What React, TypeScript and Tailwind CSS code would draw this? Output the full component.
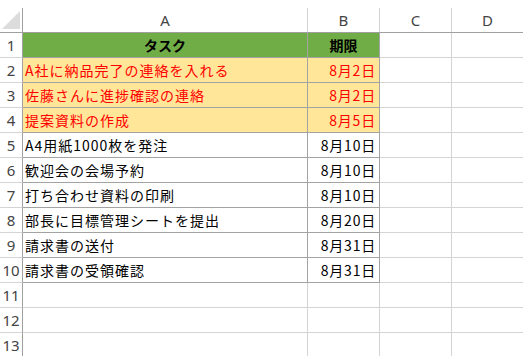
import React from "react";

type Task = { name: string; due: string; urgent?: boolean };

const tasks: Task[] = [
  { name: "A社に納品完了の連絡を入れる", due: "8月2日", urgent: true },
  { name: "佐藤さんに進捗確認の連絡", due: "8月2日", urgent: true },
  { name: "提案資料の作成", due: "8月5日", urgent: true },
  { name: "A4用紙1000枚を発注", due: "8月10日" },
  { name: "歓迎会の会場予約", due: "8月10日" },
  { name: "打ち合わせ資料の印刷", due: "8月10日" },
  { name: "部長に目標管理シートを提出", due: "8月20日" },
  { name: "請求書の送付", due: "8月31日" },
  { name: "請求書の受領確認", due: "8月31日" },
];

const font = { fontFamily: '"Noto Sans CJK JP", "Noto Sans", sans-serif' };

const rowHead =
  "h-[25px] border-r border-r-[#a0a0a0] border-b border-b-[#d4d4d4] flex items-center justify-center text-[15px] text-[#444] font-['Noto_Sans',sans-serif]";
const grid = "h-[25px] border-r border-b border-[#d4d4d4]";
const boxed = "h-[25px] border-r border-b border-[#a3a3a3] flex items-center";

export default function App() {
  return (
    <div className="w-[523px] h-[356px] overflow-hidden bg-white" style={font}>
      <div className="h-2" />
      {/* column letters */}
      <div className="grid grid-cols-[23px_285px_72px_72px_72px] border-b border-[#a0a0a0]">
        <div className="h-6 border-r border-[#a0a0a0] relative">
          <svg className="absolute left-[2px] top-[3px]" width="18" height="18" viewBox="0 0 18 18">
            <polygon points="18,0 18,18 0,18" fill="#dcdcdc" />
          </svg>
        </div>
        {["A", "B", "C", "D"].map((c) => (
          <div
            key={c}
            className="h-6 border-r border-[#d4d4d4] flex items-center justify-center text-[15px] text-[#444] font-['Noto_Sans',sans-serif]"
          >
            {c}
          </div>
        ))}
      </div>

      <div className="grid grid-cols-[23px_285px_72px_72px_72px] text-[14px]">
        {/* header row */}
        <div className={rowHead}>1</div>
        <div className={`${boxed} justify-center bg-[#70ad47] font-bold text-black`}>タスク</div>
        <div className={`${boxed} justify-center bg-[#70ad47] font-bold text-black`}>期限</div>
        <div className={grid} />
        <div className={grid} />

        {tasks.map((t, i) => (
          <React.Fragment key={i}>
            <div className={rowHead}>{i + 2}</div>
            <div
              className={`${boxed} pl-[2px] tracking-[1px] ${
                t.urgent ? "bg-[#ffe699] text-[#ff0000]" : "text-black"
              }`}
            >
              {t.name}
            </div>
            <div
              className={`${boxed} justify-end pr-[3px] tracking-[0.8px] ${
                t.urgent ? "bg-[#ffe699] text-[#ff0000]" : "text-black"
              }`}
            >
              {t.due}
            </div>
            <div className={grid} />
            <div className={grid} />
          </React.Fragment>
        ))}

        {[11, 12, 13].map((n) => (
          <React.Fragment key={n}>
            <div className={rowHead}>{n}</div>
            <div className={grid} />
            <div className={grid} />
            <div className={grid} />
            <div className={grid} />
          </React.Fragment>
        ))}
      </div>
    </div>
  );
}
